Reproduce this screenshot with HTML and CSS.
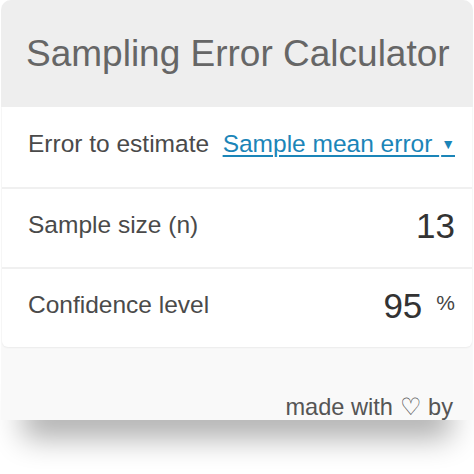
FILE: index.html
```html
<!DOCTYPE html>
<html>
<head>
<meta charset="utf-8">
<link rel="stylesheet" href="styles.css">
</head>
<body>
<div class="widget">
  <div class="header">Sampling Error Calculator</div>
  <div class="card">
    <div class="row">
      <span class="label">Error to estimate</span>
      <span class="select">Sample mean error <span class="caret">▼</span></span>
    </div>
    <div class="row">
      <span class="label">Sample size (n)</span>
      <span class="value">13</span>
    </div>
    <div class="row">
      <span class="label">Confidence level</span>
      <span class="value">95<span class="unit">%</span></span>
    </div>
  </div>
  <div class="footer">made with ♡ by</div>
</div>
</body>
</html>
```

FILE: styles.css
```css
html {
  background: #ffffff;
}
html, body {
  margin: 0;
  padding: 0;
}
body {
  font-family: "Liberation Sans", Arial, sans-serif;
  padding-bottom: 60px;
}
.widget {
  position: relative;
  margin: 0 1px;
  width: 472px;
  background: #f9f9f9;
  border-radius: 10px 10px 0 0;
}
.widget::after {
  content: "";
  position: absolute;
  left: 22px;
  right: 22px;
  bottom: 0;
  height: 40px;
  box-shadow: 0 18px 30px 0 rgba(0, 0, 0, 0.32);
  z-index: -1;
}
.header {
  height: 107px;
  box-sizing: border-box;
  background: #eeeeee;
  border-radius: 10px 10px 0 0;
  color: #666666;
  font-size: 37px;
  padding: 34px 0 0 25px;
  line-height: 40px;
}
.card {
  background: #ffffff;
  margin: 0 1px;
  border-radius: 0 0 6px 6px;
  box-shadow: 0 1px 2px rgba(0, 0, 0, 0.06);
}
.row {
  height: 80px;
  box-sizing: border-box;
  display: flex;
  align-items: center;
  justify-content: space-between;
  padding: 0 17px 0 26px;
  border-top: 2px solid #f0f0f0;
}
.row:first-child {
  border-top: none;
}
.label {
  font-size: 24.5px;
  color: #4a4a4a;
  padding-bottom: 6px;
}
.select {
  font-size: 24.5px;
  color: #1b85b8;
  text-decoration: underline;
  text-decoration-thickness: 1.5px;
  text-underline-offset: 3px;
  padding-bottom: 6px;
}
.caret {
  font-size: 14px;
  vertical-align: 3px;
  margin-left: 2px;
}
.value {
  font-size: 35px;
  color: #333333;
  padding-bottom: 4px;
}
.unit {
  font-size: 21px;
  color: #444444;
  margin-left: 14px;
  vertical-align: 8px;
}
.footer {
  height: 73px;
  box-sizing: border-box;
  text-align: right;
  padding: 48px 20px 0 0;
  font-size: 23.6px;
  line-height: 24px;
  color: #555555;
}
```
